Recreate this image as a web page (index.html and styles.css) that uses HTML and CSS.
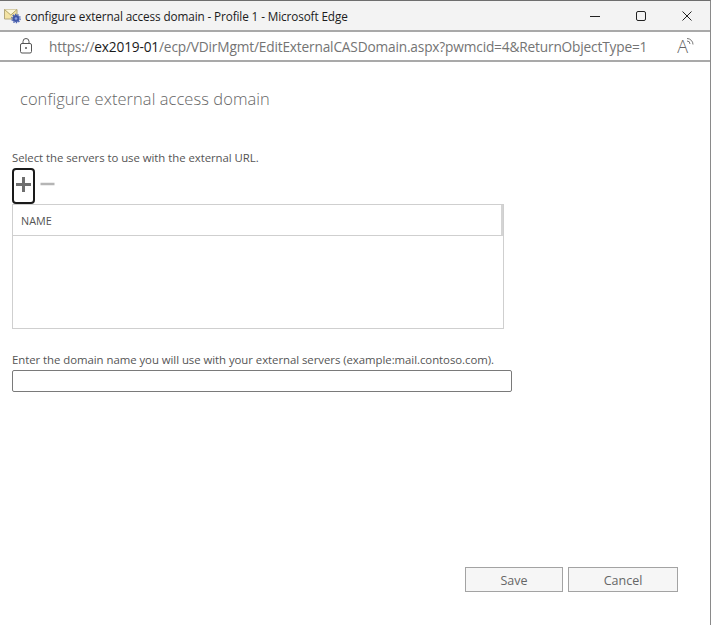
FILE: index.html
```html
<!DOCTYPE html>
<html lang="en">
<head>
<meta charset="utf-8">
<title>configure external access domain</title>
<link rel="stylesheet" href="styles.css">
</head>
<body>
<div class="window">
  <header class="titlebar">
    <svg class="app-icon" width="17" height="17" viewBox="0 0 17 17">
      <path d="M0.500 2.500h12.500v9.500h-12.500z" fill="#f3e3a4" stroke="#b3a77c" stroke-width="1"/>
      <path d="M0.500 2.500l6.300 5.500 6.200-5.500" fill="#fbf5d8" stroke="#b3a468" stroke-width="1"/>
      <circle cx="12" cy="11.500" r="3.500" fill="#3f57a8"/>
      <circle cx="12" cy="11.500" r="4.200" fill="none" stroke="#4a62b4" stroke-width="1.200" stroke-dasharray="1.500 1.100"/>
      <circle cx="12" cy="11.500" r="1.300" fill="#8ea0e0"/>
    </svg>
    <span class="window-title">configure external access domain - Profile 1 - Microsoft Edge</span>
    <div class="window-controls">
      <svg width="12" height="12" viewBox="0 0 12 12"><path d="M1 6.500h10" stroke="#222" stroke-width="1" fill="none"/></svg>
      <svg width="12" height="12" viewBox="0 0 12 12"><rect x="1.500" y="1.500" width="9" height="9" rx="1.500" stroke="#222" stroke-width="1" fill="none"/></svg>
      <svg width="12" height="12" viewBox="0 0 12 12"><path d="M1.500 1.500l9 9M10.500 1.500l-9 9" stroke="#222" stroke-width="1" fill="none"/></svg>
    </div>
  </header>
  <div class="addressbar">
    <svg class="lock" width="12" height="16" viewBox="0 0 12 16"><rect x="0.500" y="5.500" width="11" height="9.500" rx="1.500" fill="none" stroke="#555"/><path d="M3 5.500V3.500a3 3 0 0 1 6 0v2" fill="none" stroke="#555"/><circle cx="6" cy="10" r="1" fill="#555"/></svg>
    <span class="url">https://<span class="host">ex2019-01</span>/ecp/VDirMgmt/EditExternalCASDomain.aspx?pwmcid=4&amp;ReturnObjectType=1</span>
    <span class="read-aloud">A<svg class="waves" width="9" height="10" viewBox="0 0 9 10"><path d="M1 4a3 3 0 0 1 3 3M1 1.500a6 6 0 0 1 6 6" fill="none" stroke="#777" stroke-width="1"/></svg></span>
  </div>
  <main class="content">
    <h1 class="page-title">configure external access domain</h1>
    <p class="label servers-label">Select the servers to use with the external URL.</p>
    <div class="toolbar">
      <button class="tool tool-focus" aria-label="add"><svg width="15" height="15" viewBox="0 0 15 15"><path d="M7.500 0v15M0 7.500h15" stroke="#6f6f6f" stroke-width="3" fill="none"/></svg></button>
      <button class="tool" aria-label="remove"><svg width="15" height="15" viewBox="0 0 15 15"><path d="M0.500 7h14" stroke="#b5b5b5" stroke-width="2.500" fill="none"/></svg></button>
    </div>
    <div class="list">
      <div class="list-head"><span>NAME</span></div>
    </div>
    <p class="label domain-label">Enter the domain name you will use with your external servers (example:mail.contoso.com).</p>
    <input class="domain-input" type="text" aria-label="domain name">
    <div class="actions">
      <button class="btn">Save</button>
      <button class="btn btn-cancel">Cancel</button>
    </div>
  </main>
</div>
</body>
</html>
```
FILE: styles.css
```css
* { box-sizing: border-box; }
html, body { margin: 0; height: 100%; }
body { background: #fff; font-family: "Open Sans", "Noto Sans", sans-serif; color: #555; }
.window {
  width: 711px; height: 625px; display: flex; flex-direction: column;
  border-top: 1px solid #6e6e6e; border-right: 1px solid #8a8a8a;
}
.titlebar {
  height: 31px; flex: none; background: #f3f3f3; display: flex; align-items: center;
  padding-left: 4px; border-bottom: 2px solid #a9a9a9;
}
.app-icon { flex: none; margin-top: -1px; }
.window-title { margin-left: 4px; font-size: 11.75px; letter-spacing: -0.12px; color: #1c1c1c; white-space: nowrap; }
.window-controls { margin-left: auto; display: flex; gap: 34px; padding-right: 17px; align-items: center; }
.addressbar {
  height: 30px; flex: none; background: #fff; display: flex; align-items: center;
  padding-left: 20px; border-bottom: 2px solid #a9a9a9;
}
.lock { flex: none; margin-right: 17px; }
.url { font-size: 13.7px; letter-spacing: -0.17px; color: #747474; white-space: nowrap; }
.host { color: #1a1a1a; }
.read-aloud { margin-left: auto; padding-right: 15px; font-size: 18px; font-weight: 300; color: #666; display: flex; align-items: flex-start; line-height: 20px; }
.waves { margin-left: -2px; margin-top: 1px; }
.content { flex: 1; display: flex; flex-direction: column; padding: 0 32px 0 12px; min-height: 0; }
.page-title { margin: 25px 0 0 8px; font-size: 16.45px; font-weight: 300; line-height: 24px; color: #666; letter-spacing: 0.08px; }
.label { margin: 0; font-size: 11.4px; line-height: 14px; color: #555; letter-spacing: -0.05px; white-space: nowrap; }
.servers-label { margin-top: 40px; }
.toolbar { display: flex; align-items: center; margin-top: 3px; height: 36px; gap: 1px; }
.tool { width: 23px; height: 36px; padding: 0 1px 4px 0; border: 2px solid transparent; border-radius: 4px; background: none; display: flex; align-items: center; justify-content: center; }
.tool-focus { border-color: #1a1a1a; }
.list { width: 492px; height: 125px; border: 1px solid #cfcfcf; flex: none; }
.list-head { height: 31px; border-bottom: 1px solid #cfcfcf; border-right: 2px solid #d4d4d4; display: flex; align-items: center; padding-left: 8px; font-size: 10.8px; color: #555; }
.domain-label { margin-top: 24px; }
.domain-input { width: 500px; height: 22px; margin-top: 3px; flex: none; border: 1px solid #7a7a7a; border-radius: 2px; background: #fff; padding: 0; }
.actions { margin-top: auto; margin-bottom: 33px; display: flex; justify-content: flex-end; gap: 5px; }
.btn { width: 98px; height: 25px; border: 1px solid #a3a3a3; background: #f6f6f6; font-family: inherit; font-size: 12.5px; color: #666; padding: 1px 0 0; }
.btn-cancel { width: 110px; }
```
